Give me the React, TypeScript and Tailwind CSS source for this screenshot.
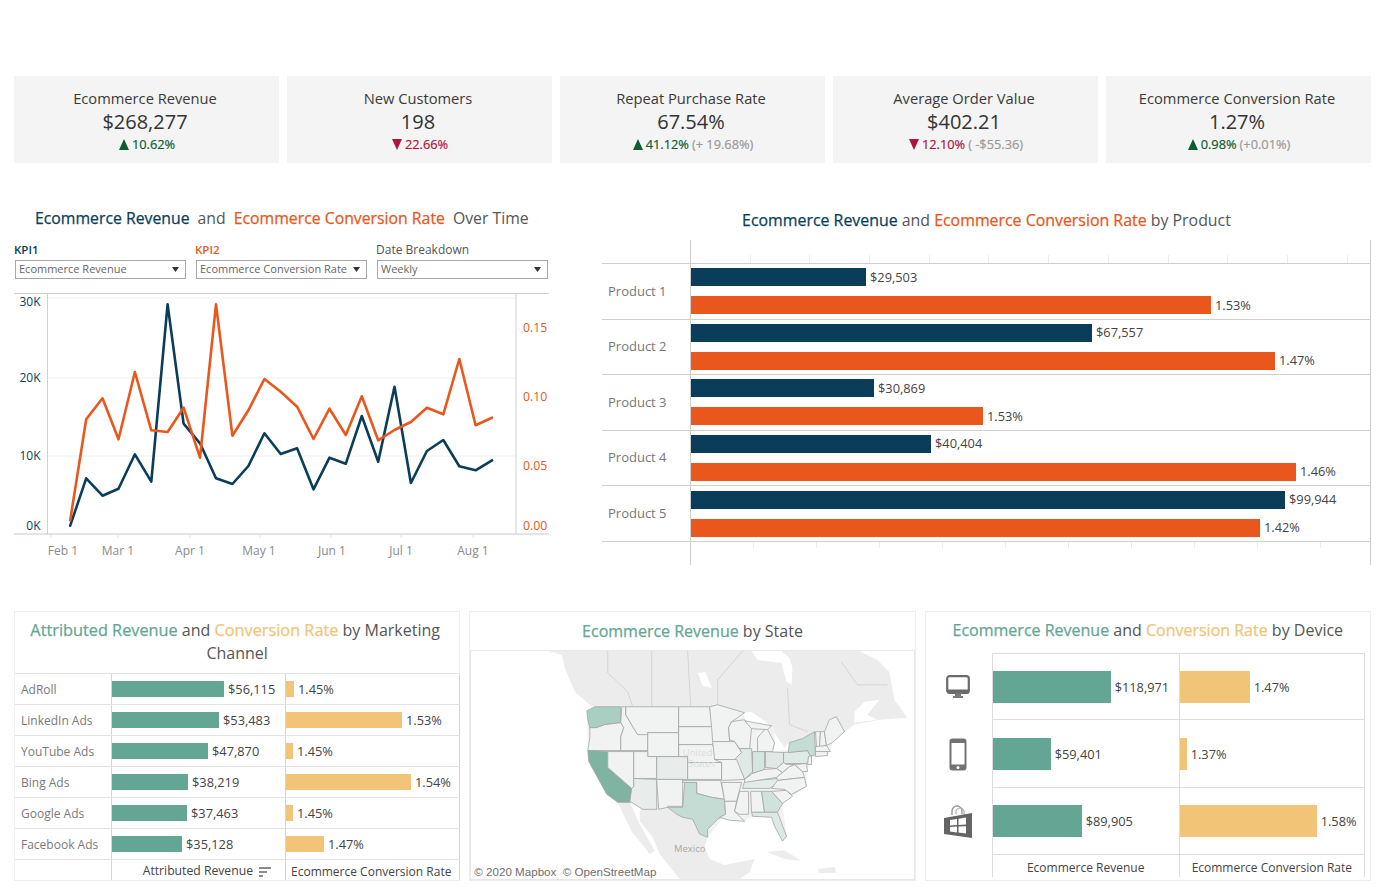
const NAVY = "#0a3d5a";
const ORANGE = "#e9571c";

const cards = [
  { title: "Ecommerce Revenue", value: "$268,277", up: true, delta: "10.62%", extra: "" },
  { title: "New Customers", value: "198", up: false, delta: "22.66%", extra: "" },
  { title: "Repeat Purchase Rate", value: "67.54%", up: true, delta: "41.12%", extra: "(+ 19.68%)" },
  { title: "Average Order Value", value: "$402.21", up: false, delta: "12.10%", extra: "( -$55.36)" },
  { title: "Ecommerce Conversion Rate", value: "1.27%", up: true, delta: "0.98%", extra: "(+0.01%)" },
];

const products = [
  { name: "Product 1", rev: 175, revLabel: "$29,503", conv: 520, convLabel: "1.53%" },
  { name: "Product 2", rev: 401, revLabel: "$67,557", conv: 584, convLabel: "1.47%" },
  { name: "Product 3", rev: 183, revLabel: "$30,869", conv: 292, convLabel: "1.53%" },
  { name: "Product 4", rev: 240, revLabel: "$40,404", conv: 605, convLabel: "1.46%" },
  { name: "Product 5", rev: 594, revLabel: "$99,944", conv: 569, convLabel: "1.42%" },
];

const channels = [
  { name: "AdRoll", rev: 112, revLabel: "$56,115", conv: 8, convLabel: "1.45%" },
  { name: "LinkedIn Ads", rev: 107, revLabel: "$53,483", conv: 116, convLabel: "1.53%" },
  { name: "YouTube Ads", rev: 96, revLabel: "$47,870", conv: 7, convLabel: "1.45%" },
  { name: "Bing Ads", rev: 76, revLabel: "$38,219", conv: 125, convLabel: "1.54%" },
  { name: "Google Ads", rev: 75, revLabel: "$37,463", conv: 7, convLabel: "1.45%" },
  { name: "Facebook Ads", rev: 70, revLabel: "$35,128", conv: 38, convLabel: "1.47%" },
];

// points read off the reference, x at 2.75 and y at 3 times the page scale
const blue = [[193,722],[237,580],[282,632],[326,611],[371,508],[416,590],[461,58],[505,416],[550,475],[594,580],[639,597],[683,543],[727,445],[772,507],[817,490],[862,613],[906,518],[951,536],[995,393],[1040,530],[1085,305],[1130,594],[1174,498],[1219,465],[1263,544],[1308,556],[1353,526]];
const orange = [[193,706],[237,403],[282,340],[326,463],[371,261],[416,436],[461,441],[505,368],[550,518],[594,58],[639,452],[683,376],[727,282],[772,320],[817,365],[862,462],[906,371],[951,450],[995,334],[1040,466],[1085,435],[1130,411],[1174,368],[1219,388],[1263,222],[1308,421],[1353,398]];
const toPoints = (pts: number[][]) => pts.map(([x, y]) => `${(x / 2.75).toFixed(1)},${(285 + y / 3).toFixed(1)}`).join(" ");

const leftLabels = [["30K", 302], ["20K", 378], ["10K", 456], ["0K", 526]] as const;
const rightLabels = [["0.15", 328], ["0.10", 397], ["0.05", 466], ["0.00", 526]] as const;
const months = [["Feb 1", 63, 51], ["Mar 1", 118, 118], ["Apr 1", 190, 190], ["May 1", 259, 260], ["Jun 1", 332, 331], ["Jul 1", 401, 401], ["Aug 1", 473, 473]] as const;

// state outlines in page pixels, traced from the reference
const states: { d: string; fill?: string }[] = [
  { d: "587,711 595,707 621,707 621,723 605,725 597,728 590,728 588,720", fill: "#a9cfc3" },
  { d: "590,728 597,728 605,725 621,723 624,728 621,737 621,751 588,751 590,738" },
  { d: "588,751 608,752 608,768 632,789 630,803 618,803 607,795 595,773 589,762", fill: "#7fb3a2" },
  { d: "608,752 634,752 634,787 632,789 608,768" },
  { d: "622,707 626,707 626,715 633,727 638,735 648,733 648,751 621,751 621,737 624,728 621,723" },
  { d: "626,707 679,707 679,733 648,733 648,735 638,735 633,727 626,715" },
  { d: "648,733 679,733 679,757 648,757" },
  { d: "634,752 648,752 648,757 657,757 657,779 634,779" },
  { d: "657,757 688,757 688,780 657,780", fill: "#e8edeb" },
  { d: "634,779 657,780 657,810 643,810 632,803 630,803 632,789 634,787", fill: "#e8edeb" },
  { d: "657,780 683,780 683,807 668,807 668,808 659,810" },
  { d: "679,707 710,707 713,727 679,727" },
  { d: "679,727 713,727 715,743 712,745 679,745" },
  { d: "679,745 712,745 717,750 722,763 688,763 688,757 679,757" },
  { d: "688,763 722,763 722,780 688,780" },
  { d: "683,781 721,781 725,800 712,798 697,794 697,783 683,783" },
  { d: "685,783 697,783 697,794 712,798 725,800 726,815 718,820 708,830 708,838 700,835 693,820 683,818 677,815 668,808 683,808", fill: "#c4dcd3" },
  { d: "710,707 718,705 745,713 732,722 729,728 730,742 713,742 712,728" },
  { d: "713,742 735,742 742,753 737,760 715,760" },
  { d: "729,728 732,722 745,720 752,728 750,750 740,749 735,742 730,740" },
  { d: "740,749 752,749 753,772 745,780 737,763 735,760 742,753", fill: "#dfe9e5" },
  { d: "753,752 765,752 765,770 753,774", fill: "#d5e5df" },
  { d: "758,738 767,728 775,743 773,752 758,752" },
  { d: "745,721 755,723 772,726 768,730 752,729" },
  { d: "766,752 784,753 784,763 777,769 766,768", fill: "#dfe9e5" },
  { d: "784,753 808,751 812,758 807,764 784,764", fill: "#dfe9e5" },
  { d: "789,750 790,743 803,739 815,732 816,755 811,757 808,751 789,753", fill: "#c4dcd3" },
  { d: "715,760 737,760 743,775 745,780 722,781 722,763" },
  { d: "722,783 742,783 737,802 725,802" },
  { d: "725,802 737,802 735,812 745,822 730,821 720,818 726,815" },
  { d: "740,792 749,792 749,815 740,815 735,812" },
  { d: "751,792 762,792 765,813 752,813" },
  { d: "762,792 772,792 783,804 778,813 765,813", fill: "#cfe2db" },
  { d: "752,813 778,813 787,837 783,842 775,827 772,818 753,817", fill: "#dce9e4" },
  { d: "772,792 787,791 793,797 783,804" },
  { d: "743,789 745,782 790,778 778,784 770,789", fill: "#e4ecea" },
  { d: "745,780 753,774 765,770 777,769 783,773 777,778 745,783" },
  { d: "777,778 783,773 790,767 795,765 803,772 805,778 778,781" },
  { d: "777,769 784,763 787,765 795,765 790,767 783,773" },
  { d: "778,781 805,778 807,787 792,795 785,790 772,789" },
  { d: "795,765 807,764 808,772 803,772" },
  { d: "809,757 812,756 812,765 808,765" },
  { d: "816,732 821,732 820,747 817,747" },
  { d: "821,732 825,732 827,746 820,747" },
  { d: "816,747 827,746 831,752 816,752" },
  { d: "816,752 828,752 828,756 816,757" },
  { d: "825,732 830,720 837,717 845,732 833,743 827,746" },
];

function Triangle({ up }: { up: boolean }) {
  return (
    <svg width="10" height="11" viewBox="0 0 10 11" className="shrink-0">
      <polygon points={up ? "5,0 10,11 0,11" : "0,0 10,0 5,11"} fill={up ? "#0b5d33" : "#b0133f"} />
    </svg>
  );
}

function KpiCard({ title, value, up, delta, extra }: (typeof cards)[number]) {
  return (
    <div className="h-[87px] bg-[#f4f4f4] flex flex-col items-center pt-[13px] pr-[3px]">
      <div className="text-[14.7px] leading-[18px] text-[#3a3a3a]">{title}</div>
      <div className="text-[20px] leading-[28px] mt-[1px] text-[#333333]">{value}</div>
      <div className="flex items-center gap-[3px] pl-[4px] text-[12.8px] leading-[16px] [-webkit-text-stroke:0.2px]">
        <Triangle up={up} />
        <span className={up ? "text-[#0b5d33]" : "text-[#b0133f]"}>{delta}</span>
        {extra && <span className="text-[#9a9a9a]">{extra}</span>}
      </div>
    </div>
  );
}

function Select({ label }: { label: string }) {
  return (
    <div className="h-[19px] border border-[#a8a8a8] flex items-center justify-between pl-[3px] pr-[6px] text-[11px] text-[#666666]">
      <span>{label}</span>
      <svg width="7" height="5" viewBox="0 0 7 5"><polygon points="0,0 7,0 3.5,5" fill="#333333" /></svg>
    </div>
  );
}

function OverTime() {
  return (
    <div className="w-[535px]">
      <div className="h-[26px] pt-[2px] flex items-center gap-[8px] pl-[21px] text-[15.8px] text-[#555555] whitespace-pre">
        <span className="[-webkit-text-stroke:0.25px] text-[#0a3d5a]">Ecommerce Revenue</span>
        <span>and</span>
        <span className="[-webkit-text-stroke:0.25px] text-[#e9571c]">Ecommerce Conversion Rate</span>
        <span>Over Time</span>
      </div>
      <div className="grid grid-cols-3 gap-[10px] pl-[1px] pr-[1px] mt-[12px]">
        <div>
          <div className="text-[11.5px] leading-[14px] mb-[3px] -ml-[1px] font-semibold text-[#0a3d5a]">KPI1</div>
          <Select label="Ecommerce Revenue" />
        </div>
        <div>
          <div className="text-[11.5px] leading-[14px] mb-[3px] -ml-[1px] font-semibold text-[#e9571c]">KPI2</div>
          <Select label="Ecommerce Conversion Rate" />
        </div>
        <div>
          <div className="text-[12px] leading-[14px] mb-[3px] -ml-[1px] font-medium text-[#555555]">Date Breakdown</div>
          <Select label="Weekly" />
        </div>
      </div>
      <svg viewBox="14 285 535 280" className="w-[535px] h-[280px] mt-[6px] block">
        {[298, 378, 456].map((y) => (
          <line key={y} x1="48" x2="516" y1={y} y2={y} stroke="#f0f0f0" />
        ))}
        <line x1="14" x2="549" y1="293.5" y2="293.5" stroke="#d0d0d0" />
        <line x1="14" x2="549" y1="534" y2="534" stroke="#c8c8c8" />
        <line x1="47.5" x2="47.5" y1="293" y2="534" stroke="#d0d0d0" />
        <line x1="516" x2="516" y1="293" y2="534" stroke="#d0d0d0" />
        {months.map(([label, cx, tick]) => (
          <g key={label}>
            <line x1={tick} x2={tick} y1="534" y2="538" stroke="#e2e2e2" />
            <text x={cx} y="555" textAnchor="middle" fontSize="12" fill="#8a8a8a">{label}</text>
          </g>
        ))}
        {leftLabels.map(([label, y]) => (
          <text key={label} x="40.5" y={y + 4} textAnchor="end" fontSize="12" fill={NAVY}>{label}</text>
        ))}
        {rightLabels.map(([label, y]) => (
          <text key={label} x="523" y={y + 4} fontSize="12.3" fill={ORANGE}>{label}</text>
        ))}
        <polyline points={toPoints(blue)} fill="none" stroke={NAVY} strokeWidth="2.6" strokeLinejoin="round" strokeLinecap="round" />
        <polyline points={toPoints(orange)} fill="none" stroke={ORANGE} strokeWidth="2.6" strokeLinejoin="round" strokeLinecap="round" />
      </svg>
    </div>
  );
}

function ByProduct() {
  return (
    <div className="w-[769px]">
      <div className="h-[35px] pb-[3px] flex items-center justify-center text-[15.9px] text-[#555555] whitespace-pre">
        <span className="[-webkit-text-stroke:0.25px] text-[#0a3d5a]">Ecommerce Revenue</span>
        <span> and </span>
        <span className="[-webkit-text-stroke:0.25px] text-[#e9571c]">Ecommerce Conversion Rate</span>
        <span> by Product</span>
      </div>
      <div className="border-b border-[#cfcfcf] flex h-[24px]">
        <div className="w-[89px] shrink-0 border-r border-[#cfcfcf]" />
        <div className="flex-1 flex items-end border-r border-[#cfcfcf]">
          {Array.from({ length: 11 }).map((_, i) => (
            <div key={i} className="w-[59.7px] h-[8px] border-r border-[#ececec]" />
          ))}
        </div>
      </div>
      {products.map((p) => (
        <div key={p.name} className="flex h-[55.6px] border-b border-[#cfcfcf]">
          <div className="w-[89px] shrink-0 border-r border-[#cfcfcf] flex items-center pl-[6px] text-[13px] text-[#777777]">
            {p.name}
          </div>
          <div className="flex-1 flex flex-col justify-center gap-[10px] border-r border-[#cfcfcf] text-[12.8px] text-[#444444]">
            <div className="flex items-center gap-[4px] h-[18px]">
              <div className="h-[18px] bg-[#0a3d5a]" style={{ width: p.rev }} />
              <span>{p.revLabel}</span>
            </div>
            <div className="flex items-center gap-[4px] h-[18px]">
              <div className="h-[18px] bg-[#e9571c]" style={{ width: p.conv }} />
              <span>{p.convLabel}</span>
            </div>
          </div>
        </div>
      ))}
      <div className="flex h-[23px]">
        <div className="w-[89px] shrink-0 border-r border-[#cfcfcf]" />
        <div className="flex-1 flex items-start border-r border-[#cfcfcf]">
          {Array.from({ length: 10 }).map((_, i) => (
            <div key={i} className="w-[63px] h-[6px] border-r border-[#ececec]" />
          ))}
        </div>
      </div>
    </div>
  );
}

function Channels() {
  return (
    <div className="border border-[#eeeeee] h-[270px] flex flex-col">
      <div className="h-[61px] pt-[7px] text-center text-[16px] leading-[23px] text-[#555555]">
        <div className="pr-[4px] whitespace-pre">
          <span className="text-[16.3px] [-webkit-text-stroke:0.25px] text-[#64a694]">Attributed Revenue</span> and{" "}
          <span className="text-[16.3px] [-webkit-text-stroke:0.25px] text-[#f2c478]">Conversion Rate</span> by Marketing
        </div>
        <div>Channel</div>
      </div>
      <div className="border-t border-[#e4e4e4]">
        {channels.map((c) => (
          <div key={c.name} className="flex h-[31px] border-b border-[#e4e4e4] items-stretch">
            <div className="w-[97px] shrink-0 border-r border-[#d4d4d4] flex items-center pl-[6px] pt-[1px] text-[12px] text-[#7a7a7a]">{c.name}</div>
            <div className="w-[174px] shrink-0 border-r border-[#d4d4d4] flex items-center gap-[4px] text-[12.8px] text-[#444444]">
              <div className="h-[16px] bg-[#64a694]" style={{ width: c.rev }} />
              <span className="pt-[2px]">{c.revLabel}</span>
            </div>
            <div className="w-[174px] shrink-0 border-r border-[#d4d4d4] flex items-center gap-[4px] text-[12.8px] text-[#444444]">
              <div className="h-[16px] bg-[#f2c478]" style={{ width: c.conv }} />
              <span className="pt-[2px]">{c.convLabel}</span>
            </div>
          </div>
        ))}
        <div className="flex h-[20px] text-[12.2px] text-[#444444] items-stretch">
          <div className="w-[97px] shrink-0 border-r border-[#d4d4d4]" />
          <div className="w-[174px] shrink-0 border-r border-[#d4d4d4] flex items-center justify-end gap-[6px] pr-[14px] pt-[3px]">
            <span>Attributed Revenue</span>
            <svg width="12" height="10" viewBox="0 0 12 10">
              <path d="M0 1h12M0 5h8M0 9h4" stroke="#666666" strokeWidth="1.4" fill="none" />
            </svg>
          </div>
          <div className="w-[174px] shrink-0 border-r border-[#d4d4d4] flex items-center pl-[5px] pt-[3px] text-[12px]">Ecommerce Conversion Rate</div>
        </div>
      </div>
    </div>
  );
}

function UsMap() {
  return (
    <div className="border border-[#eeeeee] h-[270px] flex flex-col">
      <div className="h-[38px] flex items-center justify-center text-[16px] text-[#555555] whitespace-pre">
        <span className="[-webkit-text-stroke:0.25px] text-[#64a694]">Ecommerce Revenue</span>
        <span> by State</span>
      </div>
      <div className="relative flex-1 border border-[#e8e8e8] overflow-hidden">
        <svg viewBox="471 651 443 229" preserveAspectRatio="none" className="w-full h-full block">
          <polygon
            fill="#ececec"
            points="548,651 562,655 565,668 575,692 590,705 593,707 710,707 718,705 745,713 752,712 770,725 778,738 785,748 790,743 803,739 815,732 825,732 830,720 837,717 845,732 855,725 880,720 908,718 895,700 890,672 878,660 860,651"
          />
          <polygon fill="#ffffff" points="752,651 758,660 782,663 787,682 792,685 793,668 790,658 782,651" />
          <polygon fill="#ffffff" points="855,712 865,702 880,700 868,715 878,720 855,723" />
          <polygon fill="#ffffff" points="698,673 706,672 712,688 703,686" />
          <polygon fill="#ececec" points="640,810 668,808 677,815 693,820 700,835 708,838 705,848 710,860 725,866 755,860 750,873 740,880 680,880 660,855 653,838 640,822" />
          <polygon fill="#ececec" points="618,803 630,803 640,825 655,852 650,855 632,832 622,812" />
          <polygon fill="#ececec" points="767,853 785,851 802,862 785,860" />
          <polygon fill="#ececec" points="818,870 835,868 837,874 820,874" />
          <polyline fill="none" stroke="#c4c4c4" strokeWidth="0.6" points="608,651 608,673 628,692 633,707" />
          <polyline fill="none" stroke="#c4c4c4" strokeWidth="0.6" points="652,651 652,707" />
          <polyline fill="none" stroke="#c4c4c4" strokeWidth="0.6" points="688,651 691,707" />
          <polyline fill="none" stroke="#c4c4c4" strokeWidth="0.6" points="743,651 718,680 718,705" />
          <polyline fill="none" stroke="#c4c4c4" strokeWidth="0.6" points="788,688 790,725 808,732" />
          <polyline fill="none" stroke="#c4c4c4" strokeWidth="0.6" points="842,662 858,685 888,685" />
          <polygon
            fill="#f1f3f2"
            points="587,711 595,707 710,707 718,705 745,713 745,721 775,728 775,743 773,752 790,750 815,732 825,732 830,720 837,717 845,732 833,743 831,752 828,756 812,758 808,772 807,787 793,797 783,804 787,837 783,842 772,818 753,817 745,822 726,815 708,838 693,820 668,808 643,810 630,803 618,803 589,762 588,751"
          />
          {states.map((s, i) => (
            <polygon key={i} points={s.d} fill={s.fill ?? "#f1f3f2"} stroke="#a3a3a3" strokeWidth="0.8" strokeLinejoin="round" />
          ))}
          <text x="698" y="756" textAnchor="middle" fontSize="9.5" fill="#dcdcdc">United</text>
          <text x="702" y="768" textAnchor="middle" fontSize="9.5" fill="#dcdcdc">States</text>
          <text x="690" y="853" textAnchor="middle" fontSize="9.5" fill="#a8a8a8">Mexico</text>
        </svg>
        <div className="absolute left-[3px] bottom-[0px] text-[11.6px] leading-[14px] text-[#6e6e6e] font-['Liberation_Sans',sans-serif] whitespace-pre">
          © 2020 Mapbox  © OpenStreetMap
        </div>
      </div>
    </div>
  );
}

function DesktopIcon() {
  return (
    <svg width="24" height="24" viewBox="0 0 24 24">
      <rect x="1.2" y="1.2" width="21.6" height="16.6" rx="2.4" fill="none" stroke="#6a6a6a" strokeWidth="2.2" />
      <rect x="1" y="14.5" width="22" height="4" rx="1" fill="#6a6a6a" />
      <path d="M9 18.5h6v2.5h2v2H7v-2h2z" fill="#7c7c7c" />
    </svg>
  );
}

function PhoneIcon() {
  return (
    <svg width="18" height="33" viewBox="0 0 18 33">
      <rect x="0.5" y="0.5" width="17" height="32" rx="3" fill="#727272" />
      <rect x="2.5" y="5" width="13" height="21.5" fill="#ffffff" />
      <circle cx="9" cy="29.6" r="1.5" fill="#ffffff" />
    </svg>
  );
}

function StoreIcon() {
  return (
    <svg width="30" height="34" viewBox="0 0 30 34">
      <path d="M9 10V6a5 5 0 0 1 10 0v3" fill="none" stroke="#9a9a9a" strokeWidth="1.4" />
      <path d="M13 9V7a4 4 0 0 1 8 0v3" fill="none" stroke="#b0b0b0" strokeWidth="1.2" />
      <polygon points="1,13 29,8 29,33 1,29" fill="#646464" />
      <polygon points="7,15 14,14 14,20 7,20.5" fill="#ffffff" />
      <polygon points="15.5,13.7 23,12.6 23,19.6 15.5,20" fill="#ffffff" />
      <polygon points="7,22 14,21.6 14,27.4 7,26.6" fill="#ffffff" />
      <polygon points="15.5,21.5 23,21.2 23,28.6 15.5,27.6" fill="#ffffff" />
    </svg>
  );
}

const devices = [
  { icon: <DesktopIcon />, rev: 118, revLabel: "$118,971", conv: 70, convLabel: "1.47%", h: "h-[67px]" },
  { icon: <PhoneIcon />, rev: 58, revLabel: "$59,401", conv: 7, convLabel: "1.37%", h: "h-[68px]" },
  { icon: <StoreIcon />, rev: 89, revLabel: "$89,905", conv: 137, convLabel: "1.58%", h: "h-[67px]" },
];

function ByDevice() {
  return (
    <div className="border border-[#eeeeee] h-[270px] flex flex-col">
      <div className="h-[41px] pb-[6px] flex items-center justify-center text-[16px] text-[#555555] whitespace-pre">
        <span className="[-webkit-text-stroke:0.25px] text-[#64a694]">Ecommerce Revenue</span>
        <span> and </span>
        <span className="[-webkit-text-stroke:0.25px] text-[#f2c478]">Conversion Rate</span>
        <span> by Device</span>
      </div>
      <div className="pr-[5px]">
        {devices.map((d, i) => (
          <div key={i} className={`flex items-stretch ${d.h}`}>
            <div className="w-[66px] shrink-0 flex items-center justify-center pr-[2px]">{d.icon}</div>
            <div className={`w-[188px] shrink-0 flex items-center gap-[4px] border-l border-r border-b border-[#dddddd] text-[12.8px] text-[#444444] ${i === 0 ? "border-t" : ""}`}>
              <div className="h-[32px] bg-[#64a694]" style={{ width: d.rev }} />
              <span className="pt-[2px]">{d.revLabel}</span>
            </div>
            <div className={`flex-1 flex items-center gap-[4px] border-r border-b border-[#dddddd] text-[12.8px] text-[#444444] ${i === 0 ? "border-t" : ""}`}>
              <div className="h-[32px] bg-[#f2c478]" style={{ width: d.conv }} />
              <span className="pt-[2px]">{d.convLabel}</span>
            </div>
          </div>
        ))}
        <div className="flex h-[22px] items-stretch text-[12px] text-[#444444]">
          <div className="w-[66px] shrink-0" />
          <div className="w-[188px] shrink-0 border-l border-r border-[#dddddd] flex items-center justify-center pt-[3px]">Ecommerce Revenue</div>
          <div className="flex-1 border-r border-[#dddddd] flex items-center justify-center pt-[3px]">Ecommerce Conversion Rate</div>
        </div>
      </div>
    </div>
  );
}

export default function App() {
  return (
    <div className="w-[1379px] h-[895px] bg-white overflow-hidden pt-[76px] pl-[14px] pr-[8px] font-['Open_Sans',sans-serif]">
      <div className="grid grid-cols-5 gap-[8px]">
        {cards.map((c) => (
          <KpiCard key={c.title} {...c} />
        ))}
      </div>
      <div className="flex justify-between mt-[42px]">
        <OverTime />
        <ByProduct />
      </div>
      <div className="grid grid-cols-3 gap-[9px] mt-[46px]">
        <Channels />
        <UsMap />
        <ByDevice />
      </div>
    </div>
  );
}
